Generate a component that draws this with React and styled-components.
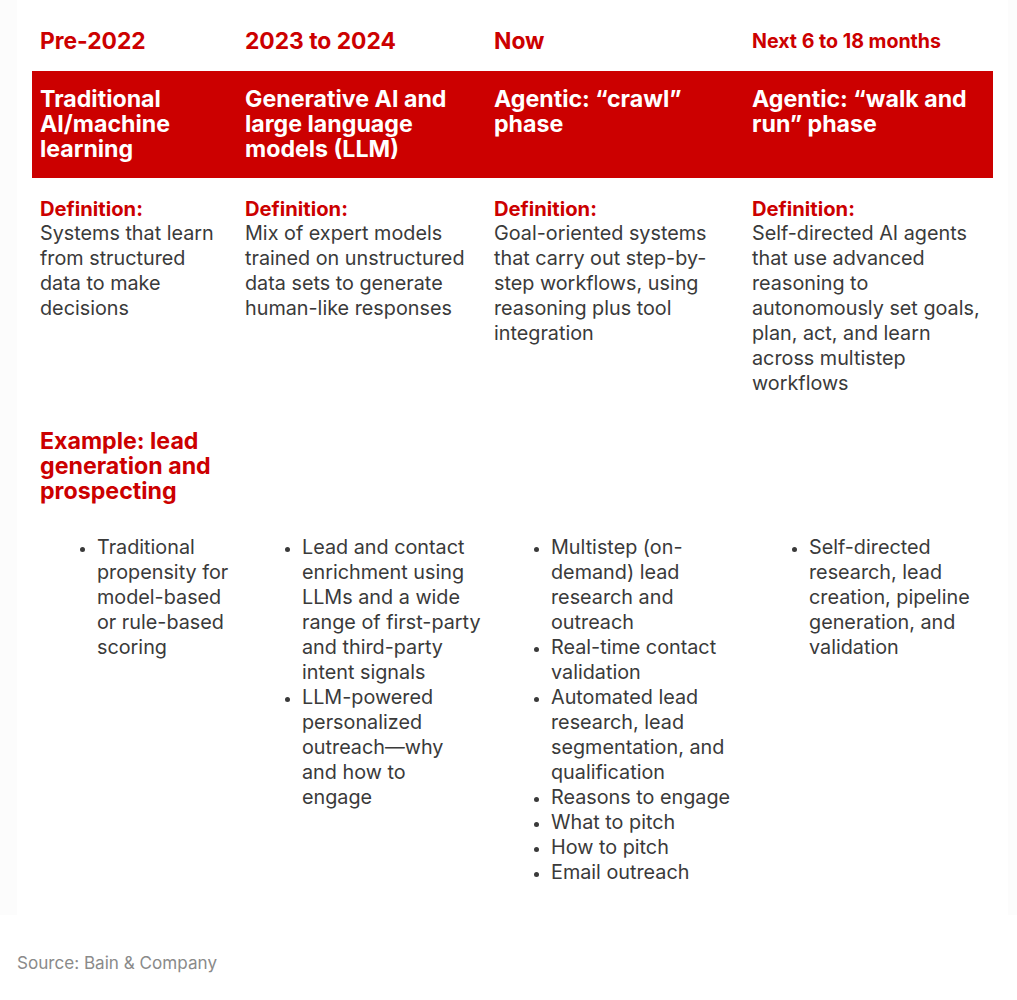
import React from "react";
import styled, { createGlobalStyle } from "styled-components";

const Global = createGlobalStyle`
  html, body { margin: 0; padding: 0; background: #ffffff; }
  body { font-family: Inter, "Noto Sans", "Liberation Sans", sans-serif; -webkit-font-smoothing: antialiased; }
`;

const RED = "#cc0000";
const TEXT = "#3a3a3a";

const Page = styled.div`
  width: 1017px;
  background: #fcfcfc;
`;

const Panel = styled.div`
  margin: 0 9px 0 17px;
  background: #ffffff;
  padding: 28px 15px 30px;
`;

const Columns = styled.div`
  display: grid;
  grid-template-columns: 205px 249px 258px 1fr;
  padding-left: 8px;
  margin-top: ${(p) => p.$mt || 0}px;
  background: ${(p) => (p.$red ? RED : "transparent")};
  padding-top: ${(p) => (p.$red ? 16 : 0)}px;
  padding-bottom: ${(p) => (p.$red ? 16 : 0)}px;
`;

const Period = styled.div`
  color: ${RED};
  font-weight: 700;
  font-size: ${(p) => (p.$small ? 19.6 : 22.8)}px;
  line-height: 26px;
  white-space: nowrap;
`;

const Phase = styled.div`
  color: #ffffff;
  font-weight: 700;
  font-size: 23.2px;
  line-height: 25px;
  white-space: nowrap;
`;

const Label = styled.div`
  color: ${RED};
  font-weight: 700;
  font-size: 20.2px;
  line-height: 25px;
  white-space: nowrap;
`;

const Body = styled.div`
  color: ${TEXT};
  font-size: 19.8px;
  line-height: 25px;
  white-space: nowrap;
`;

const Example = styled.div`
  color: ${RED};
  font-weight: 700;
  font-size: 23.2px;
  line-height: 25px;
  white-space: nowrap;
  margin-top: 33px;
  padding-left: 8px;
`;

const List = styled.ul`
  margin: 0;
  padding-left: 57px;
  list-style: disc;
  color: ${TEXT};
  font-size: 19.8px;
  line-height: 25px;
  white-space: nowrap;
`;

const Item = styled.li`
  &::marker { font-size: 17px; }
`;

const Footer = styled.div`
  background: #ffffff;
  padding-top: 38px;
  padding-bottom: 28px;
`;

const SourceText = styled.div`
  margin-left: 17px;
  color: #8a8a8a;
  font-size: 17.1px;
  line-height: 20px;
`;

const lines = (arr) =>
  arr.map((l, i) => (
    <React.Fragment key={i}>
      {l}
      {i < arr.length - 1 && <br />}
    </React.Fragment>
  ));

const periods = ["Pre-2022", "2023 to 2024", "Now", "Next 6 to 18 months"];

const phases = [
  ["Traditional", "AI/machine", "learning"],
  ["Generative AI and", "large language", "models (LLM)"],
  ["Agentic: \u201Ccrawl\u201D", "phase"],
  ["Agentic: \u201Cwalk and", "run\u201D phase"],
];

const defs = [
  ["Systems that learn", "from structured", "data to make", "decisions"],
  ["Mix of expert models", "trained on unstructured", "data sets to generate", "human-like responses"],
  ["Goal-oriented systems", "that carry out step-by-", "step workflows, using", "reasoning plus tool", "integration"],
  [
    "Self-directed AI agents",
    "that use advanced",
    "reasoning to",
    "autonomously set goals,",
    "plan, act, and learn",
    "across multistep",
    "workflows",
  ],
];

const bullets = [
  [["Traditional", "propensity for", "model-based", "or rule-based", "scoring"]],
  [
    ["Lead and contact", "enrichment using", "LLMs and a wide", "range of first-party", "and third-party", "intent signals"],
    ["LLM-powered", "personalized", "outreach\u2014why", "and how to", "engage"],
  ],
  [
    ["Multistep (on-", "demand) lead", "research and", "outreach"],
    ["Real-time contact", "validation"],
    ["Automated lead", "research, lead", "segmentation, and", "qualification"],
    ["Reasons to engage"],
    ["What to pitch"],
    ["How to pitch"],
    ["Email outreach"],
  ],
  [["Self-directed", "research, lead", "creation, pipeline", "generation, and", "validation"]],
];

export default function App() {
  return (
    <>
      <Global />
      <Page>
        <Panel>
          <Columns>
            {periods.map((p, i) => (
              <Period key={p} $small={i === 3}>
                {p}
              </Period>
            ))}
          </Columns>
          <Columns $red $mt={17}>
            {phases.map((p, i) => (
              <Phase key={i}>{lines(p)}</Phase>
            ))}
          </Columns>
          <Columns $mt={18}>
            {defs.map((d, i) => (
              <div key={i}>
                <Label>Definition:</Label>
                <Body>{lines(d)}</Body>
              </div>
            ))}
          </Columns>
          <Example>{lines(["Example: lead", "generation and", "prospecting"])}</Example>
          <Columns $mt={31}>
            {bullets.map((col, i) => (
              <List key={i}>
                {col.map((b, j) => (
                  <Item key={j}>{lines(b)}</Item>
                ))}
              </List>
            ))}
          </Columns>
        </Panel>
        <Footer>
          <SourceText>Source: Bain &amp; Company</SourceText>
        </Footer>
      </Page>
    </>
  );
}
